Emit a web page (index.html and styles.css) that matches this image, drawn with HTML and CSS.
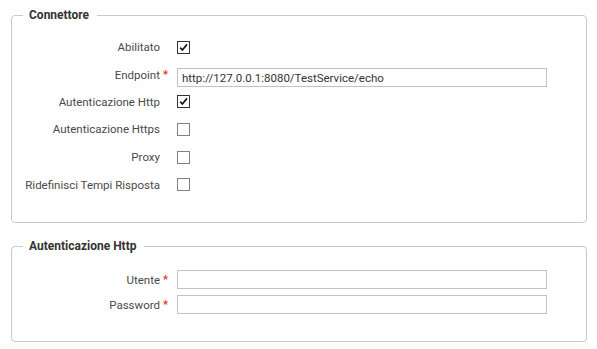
FILE: index.html
```html
<!DOCTYPE html>
<html lang="it">
<head>
<meta charset="utf-8">
<link rel="stylesheet" href="styles.css">
</head>
<body>
<div class="page">
  <fieldset class="box box-conn">
    <legend>Connettore</legend>
    <div class="row h28">
      <label class="lbl">Abilitato</label>
      <span class="cb checked"><svg viewBox="0 0 13 13" width="13" height="13"><path d="M2.6 6.6 L5.2 9.4 L10.6 2.8" fill="none" stroke="#111" stroke-width="1.9"/></svg></span>
    </div>
    <div class="row h27">
      <label class="lbl">Endpoint<span class="req">*</span></label>
      <input class="txt txt-ep" type="text" value="http://127.0.0.1:8080/TestService/echo">
    </div>
    <div class="row h27">
      <label class="lbl">Autenticazione Http</label>
      <span class="cb checked"><svg viewBox="0 0 13 13" width="13" height="13"><path d="M2.6 6.6 L5.2 9.4 L10.6 2.8" fill="none" stroke="#111" stroke-width="1.9"/></svg></span>
    </div>
    <div class="row h28">
      <label class="lbl">Autenticazione Https</label>
      <span class="cb"></span>
    </div>
    <div class="row h28">
      <label class="lbl">Proxy</label>
      <span class="cb"></span>
    </div>
    <div class="row h27">
      <label class="lbl">Ridefinisci Tempi Risposta</label>
      <span class="cb"></span>
    </div>
  </fieldset>

  <fieldset class="box box-auth">
    <legend>Autenticazione Http</legend>
    <div class="row h25">
      <label class="lbl">Utente<span class="req">*</span></label>
      <input class="txt" type="text" value="">
    </div>
    <div class="row h25">
      <label class="lbl">Password<span class="req">*</span></label>
      <input class="txt" type="password" value="">
    </div>
  </fieldset>
</div>
</body>
</html>
```
FILE: styles.css
```css
html, body {
  margin: 0;
  padding: 0;
  background: #ffffff;
}
body {
  font-family: Roboto, "Liberation Sans", sans-serif;
  font-size: 11.5px;
  color: #4a4a4a;
}
.page {
  padding: 8px 10px 0 11px;
}
.box {
  margin: 0;
  border: 1px solid #c9c9c9;
  border-radius: 4px;
  min-width: 0;
}
.box legend {
  font-weight: bold;
  font-size: 12px;
  line-height: 14px;
  color: #333;
  padding: 0 8px 0 6px;
  margin-left: 11px;
}
.box-conn {
  padding: 11px 0 24px 0;
}
.box-auth {
  margin-top: 16px;
  padding: 14px 0 24px 0;
}
.row {
  display: flex;
  align-items: center;
}
.h25 { height: 25px; }
.h27 { height: 27px; }
.h28 { height: 28px; }
.lbl {
  width: 148px;
  flex: none;
  text-align: right;
  line-height: 14px;
  color: #4a4a4a;
  position: relative;
}
.req {
  position: absolute;
  right: -8px;
  top: 0;
  color: #ee2a24;
  font-weight: bold;
  font-size: 11px;
}
.cb {
  margin-left: 17px;
  width: 11px;
  height: 11px;
  border: 1px solid #808080;
  background: #fff;
  display: inline-flex;
  align-items: center;
  justify-content: center;
  flex: none;
}
.cb.checked {
  border-color: #333;
}
.cb svg {
  display: block;
}
.txt {
  margin: 0 0 0 17px;
  box-sizing: border-box;
  width: 370px;
  height: 19px;
  border: 1px solid #c2c2c2;
  border-radius: 0;
  padding: 0 4px;
  font-family: Roboto, "Liberation Sans", sans-serif;
  font-size: 11.5px;
  color: #333;
  background: #fff;
  outline: none;
}
.txt-ep {
  margin-top: 6px;
}
```
